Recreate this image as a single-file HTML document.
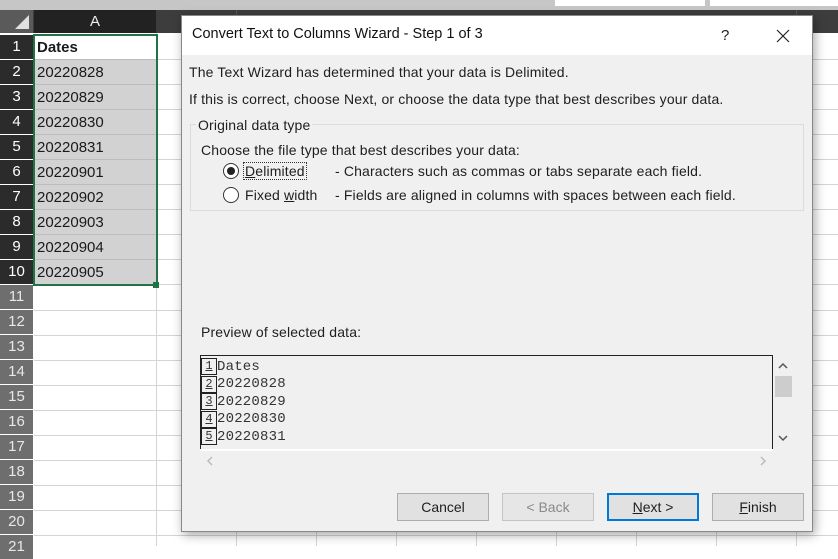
<!DOCTYPE html>
<html><head><style>
*{margin:0;padding:0;box-sizing:border-box}
body{width:838px;height:546px;overflow:hidden;background:#fff;font-family:"Liberation Sans",sans-serif;position:relative}
.a{position:absolute}
.rh{position:absolute;left:0;width:33px;height:24px;background:#6e6e6e;color:#e8e8e8;font-size:15px;text-align:center;line-height:24px}
.rh.s{background:#2b2b2b;color:#fff}
.cell{position:absolute;left:34px;width:122px;height:25px;font-size:15px;line-height:25px;padding-left:3px;color:#1a1a1a;background:#d2d2d2;border-bottom:1px solid #bcbcbc}
.hl{position:absolute;height:1px;background:#d4d4d4;left:34px;width:804px}
.vl{position:absolute;width:1px;background:#d4d4d4;top:33px;height:513px}
.dt{font-size:14px;letter-spacing:0.15px;color:#1e1e1e;position:absolute;white-space:nowrap}
.btn{position:absolute;top:493px;height:28px;background:#e1e1e1;border:1px solid #adadad;font-size:14px;text-align:center;line-height:26px;color:#1e1e1e}
.mono{font-family:"Liberation Mono",monospace;font-size:14px;letter-spacing:0.2px;color:#333;position:absolute;left:217px}
.pn{position:absolute;left:201px;width:16px;height:17px;border:1px solid #222;font-family:"Liberation Mono",monospace;font-size:12px;line-height:15px;text-align:center;color:#333;text-decoration:underline}
</style></head><body>
<div class="a" style="left:0;top:0;width:838px;height:10px;background:#c6c6c6"></div>
<div class="a" style="left:555px;top:0;width:150px;height:6px;background:#fff"></div>
<div class="a" style="left:710px;top:0;width:128px;height:6px;background:#fff"></div>
<div class="a" style="left:0;top:10px;width:838px;height:23px;background:#3d3d3d"></div>
<div class="a" style="left:0;top:10px;width:33px;height:23px;background:#5a5a5a"></div>
<svg class="a" style="left:14px;top:14px" width="16" height="16"><polygon points="15,1 15,15 1,15" fill="#e0e0e0"/></svg>
<div class="a" style="left:34px;top:10px;width:122px;height:23px;background:#222;color:#eee;font-size:15px;text-align:center;line-height:23px">A</div>
<div class="a" style="left:236px;top:10px;width:1px;height:23px;background:#555"></div>
<div class="a" style="left:796px;top:10px;width:1px;height:23px;background:#555"></div>

<div class="hl" style="top:310px"></div><div class="hl" style="top:335px"></div><div class="hl" style="top:360px"></div><div class="hl" style="top:385px"></div><div class="hl" style="top:410px"></div><div class="hl" style="top:435px"></div><div class="hl" style="top:460px"></div><div class="hl" style="top:485px"></div><div class="hl" style="top:510px"></div><div class="hl" style="top:535px"></div>
<div class="hl" style="top:59px;left:157px"></div><div class="hl" style="top:84px;left:157px"></div><div class="hl" style="top:109px;left:157px"></div><div class="hl" style="top:134px;left:157px"></div><div class="hl" style="top:159px;left:157px"></div><div class="hl" style="top:184px;left:157px"></div><div class="hl" style="top:209px;left:157px"></div><div class="hl" style="top:234px;left:157px"></div><div class="hl" style="top:259px;left:157px"></div><div class="hl" style="top:284px"></div>
<div class="vl" style="left:156px"></div><div class="vl" style="left:236px"></div><div class="vl" style="left:316px"></div><div class="vl" style="left:396px"></div><div class="vl" style="left:476px"></div><div class="vl" style="left:556px"></div><div class="vl" style="left:636px"></div><div class="vl" style="left:716px"></div><div class="vl" style="left:796px"></div>

<div class="rh s" style="top:35px">1</div><div class="rh s" style="top:60px">2</div><div class="rh s" style="top:85px">3</div><div class="rh s" style="top:110px">4</div><div class="rh s" style="top:135px">5</div><div class="rh s" style="top:160px">6</div><div class="rh s" style="top:185px">7</div><div class="rh s" style="top:210px">8</div><div class="rh s" style="top:235px">9</div><div class="rh s" style="top:260px">10</div>
<div class="rh" style="top:285px">11</div><div class="rh" style="top:310px">12</div><div class="rh" style="top:335px">13</div><div class="rh" style="top:360px">14</div><div class="rh" style="top:385px">15</div><div class="rh" style="top:410px">16</div><div class="rh" style="top:435px">17</div><div class="rh" style="top:460px">18</div><div class="rh" style="top:485px">19</div><div class="rh" style="top:510px">20</div><div class="rh" style="top:535px">21</div>

<div class="cell" style="top:35px;background:#fff;font-weight:bold">Dates</div>
<div class="cell" style="top:60px">20220828</div><div class="cell" style="top:85px">20220829</div><div class="cell" style="top:110px">20220830</div><div class="cell" style="top:135px">20220831</div><div class="cell" style="top:160px">20220901</div><div class="cell" style="top:185px">20220902</div><div class="cell" style="top:210px">20220903</div><div class="cell" style="top:235px">20220904</div><div class="cell" style="top:260px">20220905</div>
<div class="a" style="left:33px;top:34px;width:125px;height:252px;border:2px solid #217346"></div>
<div class="a" style="left:153px;top:282px;width:6px;height:6px;background:#217346"></div>

<div class="a" style="left:181px;top:15px;width:632px;height:517px;background:#f0f0f0;border:1px solid #888;box-shadow:2px 3px 10px rgba(0,0,0,.35)">
<div class="a" style="left:0;top:0;width:630px;height:39px;background:#fff"></div>
</div>
<div class="dt" style="left:192px;top:26px;font-size:14.5px;letter-spacing:0;color:#111">Convert Text to Columns Wizard - Step 1 of 3</div>
<div class="dt" style="left:721px;top:27px;font-size:15px">?</div>
<svg class="a" style="left:776px;top:29px" width="14" height="14"><path d="M1 1L13 13M13 1L1 13" stroke="#222" stroke-width="1.2"/></svg>
<div class="dt" style="left:189px;top:64px">The Text Wizard has determined that your data is Delimited.</div>
<div class="dt" style="left:189px;top:91px">If this is correct, choose Next, or choose the data type that best describes your data.</div>
<div class="a" style="left:190px;top:124px;width:614px;height:87px;border:1px solid #dcdcdc"></div>
<div class="dt" style="left:196px;top:117px;background:#f0f0f0;padding:0 2px">Original data type</div>
<div class="dt" style="left:201px;top:142px">Choose the file type that best describes your data:</div>
<svg class="a" style="left:222px;top:162px" width="18" height="18"><circle cx="9" cy="9" r="7.5" fill="#fff" stroke="#333"/><circle cx="9" cy="9" r="4" fill="#222"/></svg>
<div class="dt" style="left:243px;top:163px"><span style="border:1px dotted #333;padding:0 1px"><u>D</u>elimited</span></div>
<div class="dt" style="left:335px;top:163px">- Characters such as commas or tabs separate each field.</div>
<svg class="a" style="left:222px;top:186px" width="18" height="18"><circle cx="9" cy="9" r="7.5" fill="#fff" stroke="#333"/></svg>
<div class="dt" style="left:245px;top:187px">Fixed <u>w</u>idth</div>
<div class="dt" style="left:335px;top:187px">- Fields are aligned in columns with spaces between each field.</div>
<div class="dt" style="left:201px;top:324px">Preview of selected data:</div>
<div class="a" style="left:200px;top:355px;width:573px;height:95px;border:1px solid #222;border-bottom:none;background:#f0f0f0"></div>
<div class="a" style="left:200px;top:449px;width:573px;height:2px;background:#fff"></div>
<div class="pn" style="top:358px">1</div><div class="pn" style="top:376px">2</div><div class="pn" style="top:393px">3</div><div class="pn" style="top:411px">4</div><div class="pn" style="top:428px">5</div>
<div class="mono" style="top:359px">Dates</div><div class="mono" style="top:376px">20220828</div><div class="mono" style="top:394px">20220829</div><div class="mono" style="top:411px">20220830</div><div class="mono" style="top:429px">20220831</div>
<div class="a" style="left:775px;top:376px;width:17px;height:21px;background:#cdcdcd"></div>
<svg class="a" style="left:777px;top:361px" width="12" height="10"><path d="M2 7L6 3L10 7" stroke="#555" stroke-width="1.5" fill="none"/></svg>
<svg class="a" style="left:777px;top:433px" width="12" height="10"><path d="M2 3L6 7L10 3" stroke="#555" stroke-width="1.5" fill="none"/></svg>
<svg class="a" style="left:205px;top:455px" width="10" height="12"><path d="M7 2L3 6L7 10" stroke="#bbb" stroke-width="1.5" fill="none"/></svg>
<svg class="a" style="left:758px;top:455px" width="10" height="12"><path d="M3 2L7 6L3 10" stroke="#bbb" stroke-width="1.5" fill="none"/></svg>
<div class="btn" style="left:397px;width:92px">Cancel</div>
<div class="btn" style="left:502px;width:92px;color:#8a8a8a;background:#e6e6e6;border-color:#c4c4c4">&lt; Back</div>
<div class="btn" style="left:607px;width:92px;border:2px solid #0078d7;line-height:24px"><u>N</u>ext &gt;</div>
<div class="btn" style="left:712px;width:92px"><u>F</u>inish</div>
</body></html>
